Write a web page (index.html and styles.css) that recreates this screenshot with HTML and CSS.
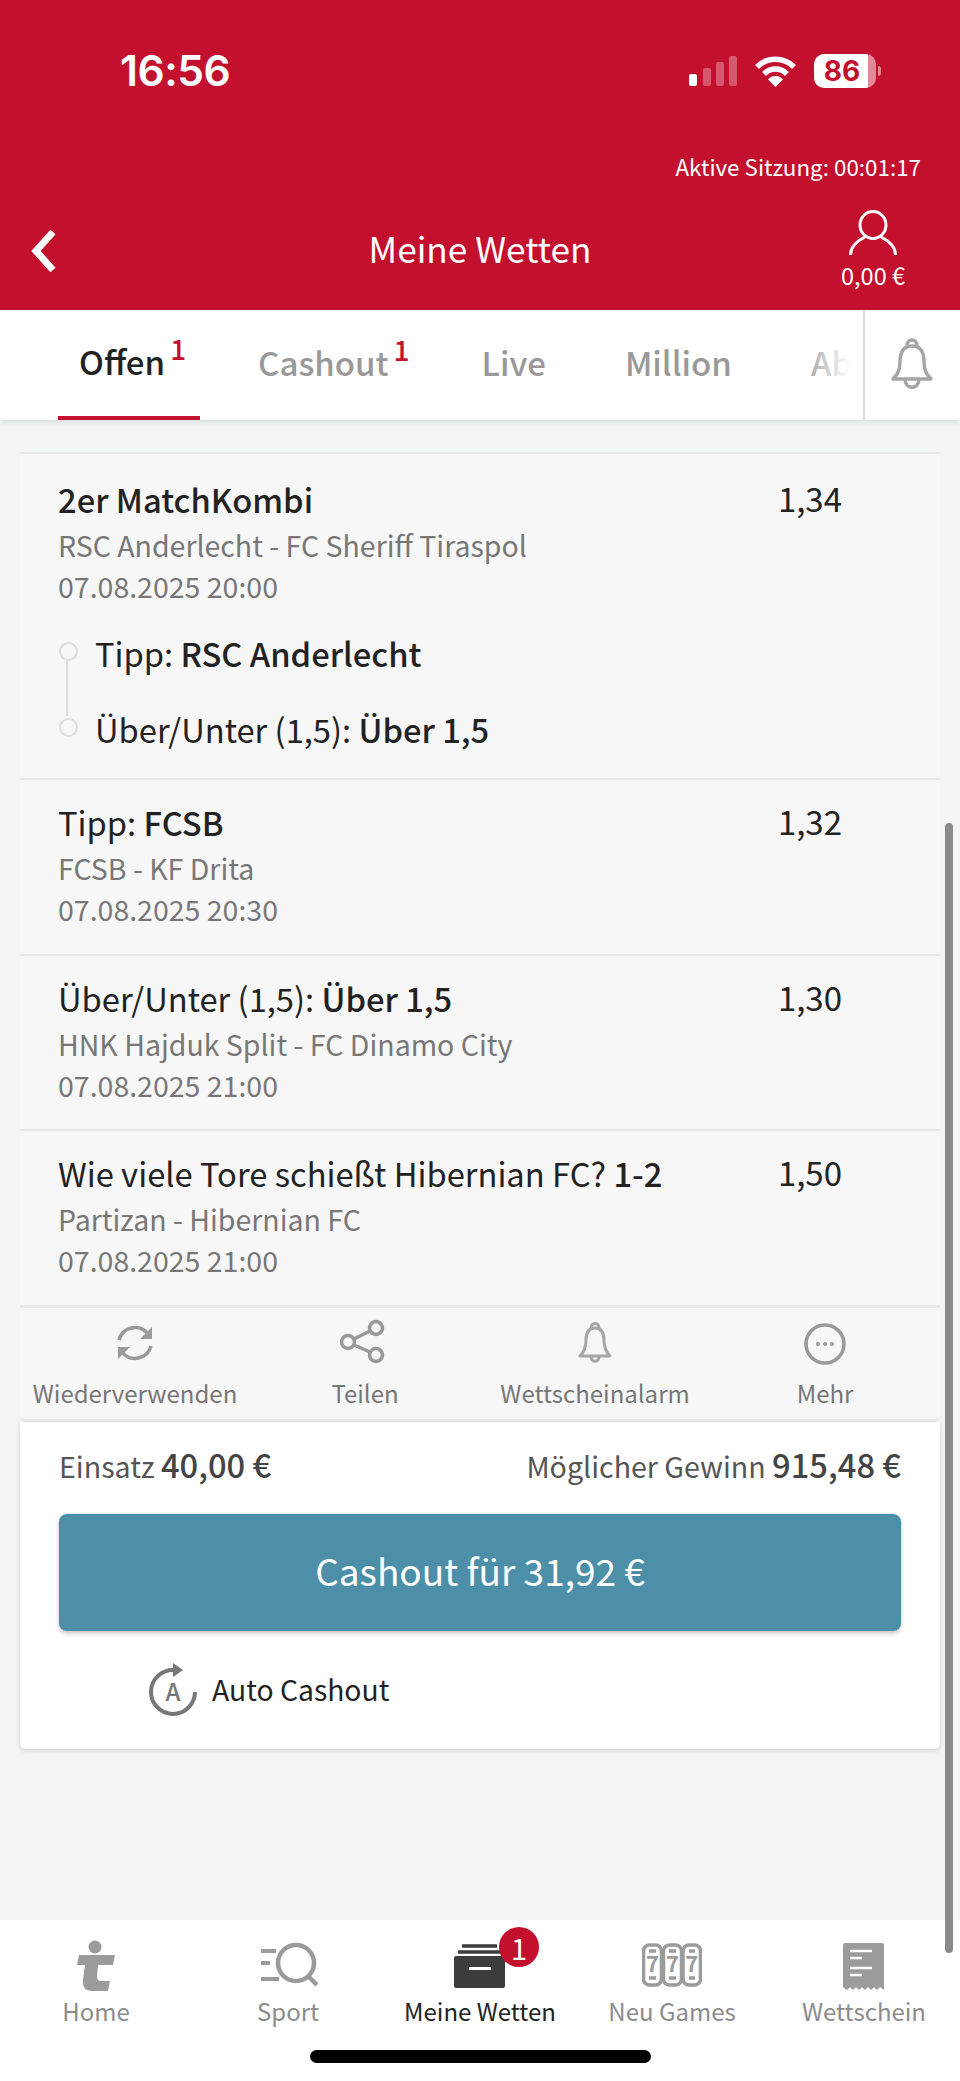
FILE: index.html
```html
<!DOCTYPE html>
<html lang="de">
<head>
<meta charset="utf-8">
<title>Meine Wetten</title>
<link rel="stylesheet" href="styles.css">
</head>
<body>
<header class="header">
  <div class="status">
    <span class="time">16:56</span>
    <div class="status-icons">
      <svg class="signal" width="48" height="30" viewBox="0 0 48 30"><rect x="0" y="18" width="8" height="12" rx="2" fill="#fff"/><rect x="14" y="12" width="8" height="18" rx="2" fill="#fff" opacity=".3"/><rect x="27" y="6" width="8" height="24" rx="2" fill="#fff" opacity=".3"/><rect x="40" y="0" width="8" height="30" rx="2" fill="#fff" opacity=".3"/></svg>
      <svg class="wifi" width="41" height="31" viewBox="0 0 41 31"><path d="M2 11 A26 26 0 0 1 39 11" fill="none" stroke="#fff" stroke-width="5.5"/><path d="M9 18 A16 16 0 0 1 32 18" fill="none" stroke="#fff" stroke-width="5.5"/><path d="M20.500 31 L13 23.500 A10 10 0 0 1 28 23.500 Z" fill="#fff"/></svg>
      <div class="battery"><span>86</span></div>
    </div>
  </div>
  <div class="session">Aktive Sitzung: 00:01:17</div>
  <div class="titlebar">
    <svg class="back" width="27" height="44" viewBox="0 0 27 44"><path d="M23 3 L6 22 L23 41" fill="none" stroke="#fff" stroke-width="7"/></svg>
    <h1 class="title">Meine Wetten</h1>
    <div class="account">
      <svg width="50" height="46" viewBox="0 0 50 46"><ellipse cx="25" cy="15" rx="13" ry="13.500" fill="none" stroke="#fff" stroke-width="3"/><path d="M2.500 45 C2.500 36 9 31 17 27 M47.500 45 C47.500 36 41 31 33 27" fill="none" stroke="#fff" stroke-width="3"/></svg>
      <span>0,00 €</span>
    </div>
  </div>
</header>

<nav class="tabs">
  <div class="tab-scroll">
    <a class="tab active">Offen<sup class="count">1</sup></a>
    <a class="tab">Cashout<sup class="count">1</sup></a>
    <a class="tab">Live</a>
    <a class="tab">Million</a>
    <a class="tab">Abgerechnet</a>
    <div class="tab-fade"></div>
  </div>
  <div class="tab-bell">
    <svg width="42" height="54" viewBox="0 0 42 54"><path d="M21 8 C11 8 9 16 9 24 C9 33 6 37 2 41 H40 C36 37 33 33 33 24 C33 16 31 8 21 8 Z M16 8 C16 0 26 0 26 8 M14 41 C14 52 28 52 28 41" fill="none" stroke="#a6a6a6" stroke-width="3.500" stroke-linejoin="round"/></svg>
  </div>
</nav>

<main class="main">
  <section class="card">
    <article class="row first">
      <div class="row-body">
        <div class="pick"><b>2er MatchKombi</b></div>
        <div class="meta">RSC Anderlecht - FC Sheriff Tiraspol</div>
        <div class="meta">07.08.2025 20:00</div>
        <ul class="tips">
          <li class="tip">Tipp: <b>RSC Anderlecht</b></li>
          <li class="tip">Über/Unter (1,5): <b>Über 1,5</b></li>
        </ul>
      </div>
      <div class="odds">1,34</div>
    </article>
    <article class="row">
      <div class="row-body">
        <div class="pick">Tipp: <b>FCSB</b></div>
        <div class="meta">FCSB - KF Drita</div>
        <div class="meta">07.08.2025 20:30</div>
      </div>
      <div class="odds">1,32</div>
    </article>
    <article class="row">
      <div class="row-body">
        <div class="pick">Über/Unter (1,5): <b>Über 1,5</b></div>
        <div class="meta">HNK Hajduk Split - FC Dinamo City</div>
        <div class="meta">07.08.2025 21:00</div>
      </div>
      <div class="odds">1,30</div>
    </article>
    <article class="row">
      <div class="row-body">
        <div class="pick">Wie viele Tore schießt Hibernian FC? <b>1-2</b></div>
        <div class="meta">Partizan - Hibernian FC</div>
        <div class="meta">07.08.2025 21:00</div>
      </div>
      <div class="odds">1,50</div>
    </article>
    <div class="actions">
      <div class="action">
        <svg width="60" height="48" viewBox="0 0 60 48"><path d="M14 21 A16.500 16.500 0 0 1 43 15 M46 27 A16.500 16.500 0 0 1 17 33" fill="none" stroke="#999" stroke-width="3.500"/><path d="M47 8 V20 H35 Z M13 40 V28 H25 Z" fill="#999"/></svg>
        <span>Wiederverwenden</span>
      </div>
      <div class="action">
        <svg width="60" height="48" viewBox="0 0 60 48"><circle cx="41" cy="9" r="6.500" fill="none" stroke="#999" stroke-width="3.500"/><circle cx="13" cy="23" r="6.500" fill="none" stroke="#999" stroke-width="3.500"/><circle cx="41" cy="36" r="6.500" fill="none" stroke="#999" stroke-width="3.500"/><path d="M35 12 L19 20 M19 26 L35 33" stroke="#999" stroke-width="3.500"/></svg>
        <span>Teilen</span>
      </div>
      <div class="action">
        <svg width="60" height="48" viewBox="0 0 60 48"><path d="M30 9 C23 9 21 14 21 21 C21 29 19 33 15 37 H45 C41 33 39 29 39 21 C39 14 37 9 30 9 Z M26 9 C26 3 34 3 34 9 M26 37 C26 44 34 44 34 37" fill="none" stroke="#a6a6a6" stroke-width="3" stroke-linejoin="round"/></svg>
        <span>Wettscheinalarm</span>
      </div>
      <div class="action">
        <svg width="60" height="48" viewBox="0 0 60 48"><circle cx="30" cy="25" r="19" fill="none" stroke="#999" stroke-width="3.500"/><circle cx="23" cy="25" r="2" fill="#999"/><circle cx="30" cy="25" r="2" fill="#999"/><circle cx="37" cy="25" r="2" fill="#999"/></svg>
        <span>Mehr</span>
      </div>
    </div>
    <div class="summary">
      <div class="totals">
        <span>Einsatz <b>40,00 €</b></span>
        <span>Möglicher Gewinn <b>915,48 €</b></span>
      </div>
      <button class="cashout">Cashout für 31,92 €</button>
      <div class="auto">
        <svg width="50" height="55" viewBox="0 0 50 55"><path d="M27 7 A22 22 0 1 0 47 29" fill="none" stroke="#777" stroke-width="4"/><path d="M25 0 L35 7 L25 14 Z" fill="#777"/><text x="25" y="38" text-anchor="middle" class="auto-letter">A</text></svg>
        <span>Auto Cashout</span>
      </div>
    </div>
  </section>
</main>

<footer class="nav">
  <div class="nav-items">
    <a class="nav-item">
      <svg width="60" height="52" viewBox="0 0 60 52"><circle cx="29" cy="7" r="6.500" fill="#9b9b9b"/><path d="M13 15 H49 L47 25 H32 L31 37 Q31 41 35 41 H44 L42 51 H26 Q16 51 17 40 L19 25 H11 Z" fill="#9b9b9b"/></svg>
      <span>Home</span>
    </a>
    <a class="nav-item">
      <svg width="60" height="52" viewBox="0 0 60 52"><circle cx="38" cy="23" r="18" fill="none" stroke="#9b9b9b" stroke-width="4.500"/><path d="M50 36 L59 45" stroke="#9b9b9b" stroke-width="4.500"/><path d="M3 11 H18 M3 23 H12 M3 39 H21" stroke="#9b9b9b" stroke-width="4"/></svg>
      <span>Sport</span>
    </a>
    <a class="nav-item current">
      <svg width="60" height="52" viewBox="0 0 60 52"><path d="M12 6 H47 M8 12 H50" stroke="#3c3c3c" stroke-width="3.500"/><rect x="4" y="16" width="51" height="32" rx="2" fill="#3c3c3c"/><path d="M19 28.500 H41" stroke="#fff" stroke-width="3"/></svg>
      <span>Meine Wetten</span>
      <em class="badge">1</em>
    </a>
    <a class="nav-item">
      <svg width="60" height="52" viewBox="0 0 60 52"><g fill="none" stroke="#9b9b9b" stroke-width="3.500"><rect x="1.500" y="5" width="18" height="40" rx="6"/><rect x="21.500" y="5" width="18" height="40" rx="6"/><rect x="41" y="5" width="17.500" height="40" rx="6"/><path d="M7 11 H14 M27 11 H34 M47 11 H53 M7 38 H14 M27 38 H34 M47 38 H53"/></g><text x="10.500" y="32" class="reel">7</text><text x="30.500" y="32" class="reel">7</text><text x="49.700" y="32" class="reel">7</text></svg>
      <span>Neu Games</span>
    </a>
    <a class="nav-item">
      <svg width="60" height="52" viewBox="0 0 60 52"><path d="M11 3 H48 Q50 3 50 5 V50 L46 47 L43 50 L40 47 L37 50 L34 47 L31 50 L28 47 L25 50 L22 47 L19 50 L16 47 L13 50 L9 47 V5 Q9 3 11 3 Z" fill="#9b9b9b"/><path d="M16 11 H38 M16 18 H28 M16 28 H38 M16 35 H28" stroke="#fff" stroke-width="2.500"/></svg>
      <span>Wettschein</span>
    </a>
  </div>
  <div class="home-bar"></div>
</footer>
<div class="scrollbar"></div>
</body>
</html>
```

FILE: styles.css
```css
* { box-sizing: border-box; }
html, body { margin: 0; padding: 0; }
body {
  position: relative;
  width: 960px;
  height: 2081px;
  overflow: hidden;
  display: flex;
  flex-direction: column;
  background: #f3f5f5;
  color: #222;
  font-family: "Noto Sans CJK SC", "Noto Sans", sans-serif;
}
b { font-weight: 500; }

/* header */
.header { height: 310px; flex: none; background: #c4102f; color: #fff; }
.status {
  height: 142px;
  display: flex;
  align-items: center;
  justify-content: space-between;
  padding: 0 84px 0 120px;
}
.time { font: 600 42.5px/50px "Inter", "Liberation Sans", sans-serif; letter-spacing: -0.5px; }
.status-icons { display: flex; align-items: center; gap: 18px; }
.battery {
  position: relative;
  width: 62px;
  height: 34px;
  border-radius: 10px;
  background: linear-gradient(90deg, #fff 87%, rgba(255,255,255,.5) 87%);
  color: #c4102f;
  font: 700 28px/34px "Inter", "Liberation Sans", sans-serif;
  text-align: center;
  padding-right: 6px;
}
.battery::after {
  content: "";
  position: absolute;
  left: 64px;
  top: 12px;
  width: 3px;
  height: 10px;
  border-radius: 0 3px 3px 0;
  background: rgba(255,255,255,.5);
}
.session {
  height: 50px;
  padding-right: 39px;
  text-align: right;
  font-size: 22.4px;
  line-height: 48px;
}
.titlebar {
  height: 118px;
  display: grid;
  grid-template-columns: 1fr auto 1fr;
  padding: 18px 30px 0;
  align-items: start;
}
.back { margin-top: 19px; }
.title { margin: 17px 0 0; font-size: 35.2px; line-height: 42px; font-weight: 400; }
.account {
  justify-self: end;
  width: 70px;
  margin-right: 22px;
  display: flex;
  flex-direction: column;
  align-items: center;
  font-size: 23.5px;
  line-height: 30px;
  white-space: nowrap;
}
.account span { margin-top: 4px; }

/* tabs */
.tabs {
  height: 110px;
  flex: none;
  display: flex;
  background: #fff;
  box-shadow: 0 3px 3px rgba(0,0,0,.07);
}
.tab-scroll {
  position: relative;
  width: 863px;
  display: flex;
  gap: 37px;
  padding-left: 58px;
  overflow: hidden;
}
.tab {
  padding: 0 21px;
  flex: none;
  color: #999;
  font-size: 33px;
  font-weight: 500;
  line-height: 104px;
  white-space: nowrap;
}
.tab.active { color: #222; border-bottom: 4px solid #c4102f; height: 110px; line-height: 102px; }
.count {
  position: relative;
  top: -15px;
  margin-left: 5px;
  margin-right: -7px;
  color: #c4102f;
  font-size: 28px;
  font-weight: 500;
  line-height: 0;
  vertical-align: baseline;
}
.tab-fade {
  position: absolute;
  right: 0;
  top: 0;
  bottom: 0;
  width: 62px;
  background: linear-gradient(90deg, rgba(255,255,255,0), #fff 78%);
}
.tab-bell {
  flex: 1;
  border-left: 2px solid #ddd;
  display: flex;
  justify-content: center;
  align-items: center;
  padding-right: 2px;
}

/* main */
.main { flex: 1; padding: 32px 20px 0; }
.card { background: transparent; }
.row {
  display: flex;
  justify-content: space-between;
  padding: 20px 98px 24.5px 38px;
  border-top: 2px solid #e8e8e8;
  background: #f7f7f7;
}
.row.first { padding-top: 23px; padding-bottom: 28px; }
.pick, .odds { font-size: 32.7px; line-height: 44px; color: #222; white-space: nowrap; }
.odds { font-size: 33px; margin-top: -1px; }
.meta { font-size: 28.5px; line-height: 41px; color: #777; white-space: nowrap; }
.pick + .meta { margin-top: 3px; }
.tips { list-style: none; margin: 26px 0 0; padding: 0; }
.tip {
  position: relative;
  padding-left: 37px;
  font-size: 32.7px;
  line-height: 42px;
  color: #222;
  white-space: nowrap;
}
.tip + .tip { margin-top: 34px; }
.tip::before {
  content: "";
  position: absolute;
  left: 1px;
  top: 10px;
  width: 15px;
  height: 15px;
  border: 2.5px solid #ddd;
  border-radius: 50%;
}
.tip:first-child::after {
  content: "";
  position: absolute;
  left: 8px;
  top: 28px;
  width: 2px;
  height: 56px;
  background: #ddd;
}
.actions {
  height: 117.5px;
  display: grid;
  grid-template-columns: repeat(4, 1fr);
  padding-top: 11px;
  border-top: 3px solid #e8e8e8;
  border-bottom: 3px solid #e8e8e8;
  border-radius: 0 0 6px 6px;
  background: #f7f7f7;
}
.action {
  display: flex;
  flex-direction: column;
  align-items: center;
  font-size: 24px;
  line-height: 36px;
  color: #777;
  white-space: nowrap;
}
.action span { margin-top: 8px; }
.summary {
  padding: 25px 39px 31px;
  border-radius: 0 0 6px 6px;
  background: #fff;
  box-shadow: 0 2px 4px rgba(0,0,0,.14);
}
.totals {
  display: flex;
  justify-content: space-between;
  align-items: center;
  height: 40px;
  padding-bottom: 4px;
  font-size: 28.6px;
  line-height: 36px;
  color: #555;
}
.totals b { color: #444; font-size: 32.7px; }
.cashout {
  display: block;
  width: 100%;
  height: 117px;
  margin-top: 27px;
  padding: 0 0 4px;
  border: 0;
  border-radius: 8px;
  background: #4d8fa9;
  box-shadow: 0 2px 4px rgba(0,0,0,.25);
  color: #fff;
  font: 400 37px/1 "Noto Sans CJK SC", "Noto Sans", sans-serif;
}
.auto {
  display: flex;
  align-items: center;
  gap: 14px;
  margin: 32px 0 0 89px;
  font-size: 28.3px;
  line-height: 48px;
  color: #222;
}
.auto span { padding-bottom: 4px; }
.auto-letter { font-size: 24px; font-weight: 500; fill: #777; }

/* bottom nav */
.nav { height: 161px; flex: none; background: #fff; }
.nav-items { display: grid; grid-template-columns: repeat(5, 192px); padding-top: 20px; }
.nav-item {
  position: relative;
  display: flex;
  flex-direction: column;
  align-items: center;
  font-size: 24px;
  line-height: 36px;
  color: #8c8c8c;
  white-space: nowrap;
}
.nav-item span { margin-top: 1px; }
.nav-item.current { color: #222; }
.badge {
  position: absolute;
  left: 115px;
  top: -13px;
  width: 40px;
  height: 40px;
  border-radius: 50%;
  background: #c4102f;
  color: #fff;
  font-size: 29px;
  font-style: normal;
  line-height: 40px;
  text-align: center;
}
.reel { font-size: 22px; font-weight: 700; fill: #9b9b9b; text-anchor: middle; }
.home-bar {
  width: 341px;
  height: 13px;
  margin: 21px auto 0;
  border-radius: 7px;
  background: #000;
}
.scrollbar {
  position: absolute;
  left: 945px;
  top: 823px;
  width: 8px;
  height: 1130px;
  border-radius: 4px;
  background: #8a8a8a;
}
```
